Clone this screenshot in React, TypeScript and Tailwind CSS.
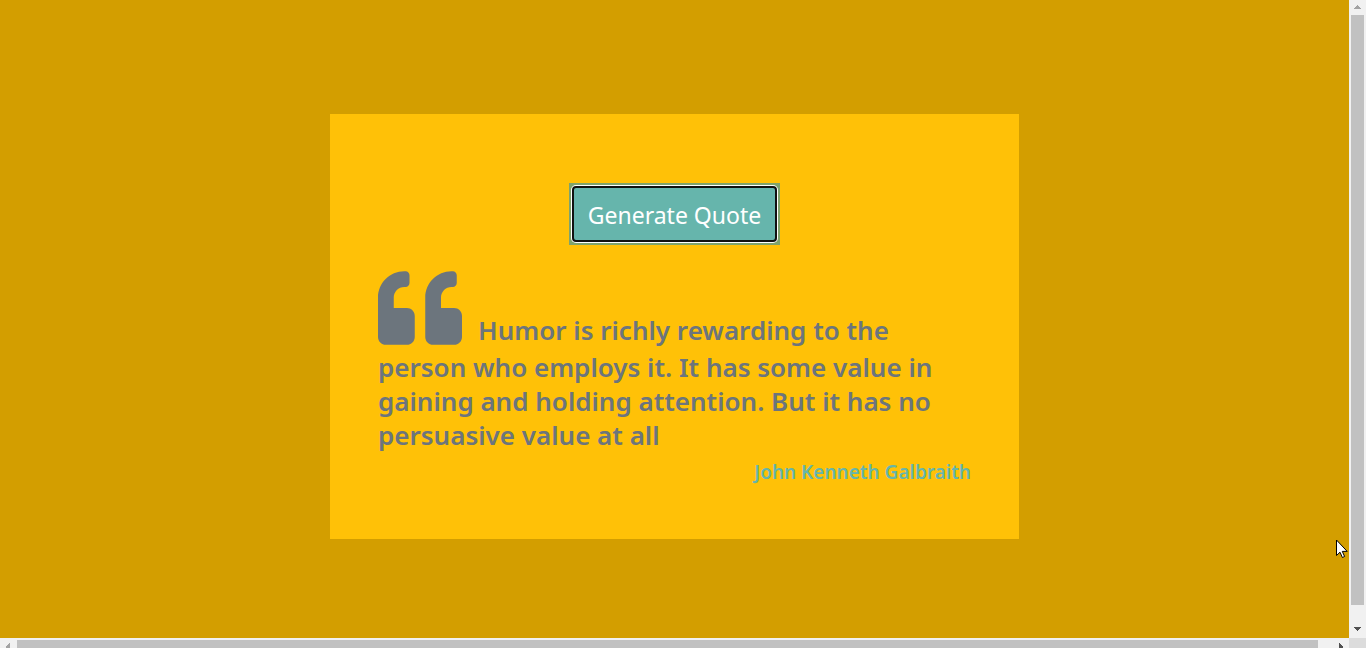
import React from "react";

function QuoteIcon() {
  return (
    <svg
      viewBox="0 0 512 512"
      className="mr-4 inline-block size-[84px] align-[-10px]"
      fill="currentColor"
      aria-hidden="true"
    >
      <path d="M464 256h-80v-64c0-35.3 28.7-64 64-64h8c13.3 0 24-10.7 24-24V56c0-13.3-10.7-24-24-24h-8c-88.4 0-160 71.6-160 160v240c0 26.5 21.5 48 48 48h128c26.5 0 48-21.5 48-48V304c0-26.5-21.5-48-48-48zm-288 0H96v-64c0-35.3 28.7-64 64-64h8c13.3 0 24-10.7 24-24V56c0-13.3-10.7-24-24-24h-8C71.6 32 0 103.6 0 192v240c0 26.5 21.5 48 48 48h128c26.5 0 48-21.5 48-48V304c0-26.5-21.5-48-48-48z" />
    </svg>
  );
}

function VerticalScrollbar() {
  return (
    <div className="flex w-[17px] shrink-0 flex-col items-center bg-[#f1f1f1]" aria-hidden="true">
      <svg viewBox="0 0 17 15" className="h-[15px] w-[17px] shrink-0" shapeRendering="crispEdges">
        <path d="M8 5h1v1h1v1h1v1h1v1H5V8h1V7h1V6h1z" fill="#a3a3a3" />
      </svg>
      <div className="w-[13px] grow bg-[#c1c1c1]" />
      <svg viewBox="0 0 17 33" className="h-[33px] w-[17px] shrink-0" shapeRendering="crispEdges">
        <path d="M5 22h7v1h-1v1h-1v1H9v1H8v-1H7v-1H6v-1H5z" fill="#505050" />
      </svg>
    </div>
  );
}

function HorizontalScrollbar() {
  return (
    <div className="flex h-[10px] shrink-0 bg-[#f1f1f1]" aria-hidden="true">
      <svg viewBox="0 0 17 10" className="h-[10px] w-[17px] shrink-0" shapeRendering="crispEdges">
        <path d="M10 5v5H6V8h1V7h1V6h1V5z" fill="#a3a3a3" />
      </svg>
      <div className="mt-[2px] grow bg-[#c1c1c1]" />
      <svg viewBox="0 0 31 10" className="h-[10px] w-[31px] shrink-0" shapeRendering="crispEdges">
        <path d="M21 5h1v1h1v1h1v1h1v2h-4z" fill="#505050" />
      </svg>
      <div className="w-[17px] shrink-0 bg-[#dcdcdc]" />
    </div>
  );
}

function Pointer() {
  return (
    <svg viewBox="0 0 12 20" className="absolute right-[18px] bottom-[89px] h-5 w-3" aria-hidden="true">
      <path
        d="M.5 1v15.5L4 13.2l2.4 5.3 2.2-1-2.3-5.1h4.9z"
        fill="#fff"
        stroke="#000"
        strokeWidth="1"
      />
    </svg>
  );
}

export default function App() {
  return (
    <div className="relative flex h-screen flex-col overflow-hidden bg-[#d39e00] font-['Noto_Sans','Open_Sans',sans-serif]">
      <div className="flex min-h-0 grow">
        <main className="grow pt-[114px]">
          <section className="mx-auto max-w-[689px] bg-[#ffc107] px-12 pt-[69px] pb-[55px]">
            <div className="mx-auto w-fit bg-[#7fa36c] p-[3px]">
              <button
                type="button"
                className="block h-14 rounded border-2 border-[#101010] bg-[#66b5ac] px-3.5 pt-0.5 text-[23px] leading-8 text-white ring-1 ring-white outline-none"
              >
                Generate Quote
              </button>
            </div>
            <h1 className="mt-[21px] text-[26px] leading-[34px] font-semibold text-[#6c757d]">
              <QuoteIcon />
              Humor is richly rewarding to the person who employs it. It has some value in gaining and
              holding attention. But it has no persuasive value at all
            </h1>
            <p className="mt-2 text-right text-[19px] leading-6 font-semibold text-[#66b5ac]">
              John Kenneth Galbraith
            </p>
          </section>
        </main>
        <VerticalScrollbar />
      </div>
      <HorizontalScrollbar />
      <Pointer />
    </div>
  );
}
